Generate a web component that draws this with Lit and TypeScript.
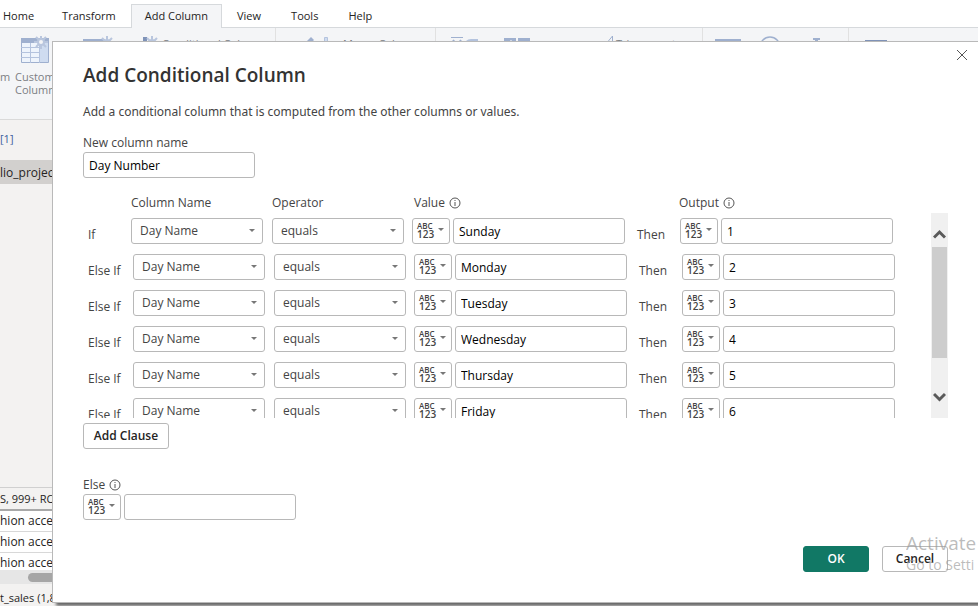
import { LitElement, html, css, svg } from "lit";
import { customElement, property } from "lit/decorators.js";

const FONT = css`"Open Sans", "Noto Sans", sans-serif`;

const burst = (x: number, y: number) => svg`
  <g transform="translate(${x} ${y})" stroke="#b9c6de" stroke-width="2">
    <path d="M7 0V4M7 10V14M0 7H4M10 7H14M2 2L5 5M9 9L12 12M12 2L9 5M5 9L2 12" />
    <circle cx="7" cy="7" r="3" fill="#f4f5f7" />
  </g>`;

const infoIcon = html`<svg class="info" width="12" height="12" viewBox="0 0 12 12" aria-hidden="true">
  <circle cx="6" cy="6" r="5" fill="none" stroke="#555" />
  <path d="M6 5V9M6 3V4" stroke="#555" />
</svg>`;

const caret = html`<svg class="caret" width="6" height="4" viewBox="0 0 6 4" aria-hidden="true">
  <path d="M0 0H6L3 3Z" fill="#777" />
</svg>`;

@customElement("type-picker")
export class TypePicker extends LitElement {
  static styles = css`
    :host { display: block; flex: none; }
    button {
      display: flex; align-items: center; gap: 4px;
      box-sizing: border-box; width: 38px; height: 26px; padding: 0 0 2px 4px;
      border: 1px solid #b8b8b8; border-radius: 3px; background: #fff;
      color: #444; font-family: ${FONT}; font-weight: 600; text-align: left;
    }
    .glyph { display: block; width: 17px; }
    .abc { display: block; font-size: 8px; line-height: 8px; }
    .num { display: block; font-size: 10px; line-height: 9px; }
  `;
  render() {
    return html`<button type="button" aria-label="Value type" aria-haspopup="listbox">
      <span class="glyph"><span class="abc">ABC</span><span class="num">123</span></span>${caret}
    </button>`;
  }
}

@customElement("clause-row")
export class ClauseRow extends LitElement {
  @property() keyword = "Else If";
  @property() value = "";
  @property() output = "";

  static styles = css`
    :host {
      display: flex; align-items: center; height: 26px;
      padding-left: 5px; color: #444; font: 12px/16px ${FONT};
    }
    :host([keyword="Else If"]) .keyword { width: 45px; }
    .keyword { flex: none; width: 43px; padding-top: 7px; white-space: nowrap; }
    .pick { display: grid; align-items: center; flex: none; width: 132px; margin-right: 9px; }
    .pick.operator { margin-right: 8px; }
    .pick > * { grid-area: 1 / 1; }
    .pick .caret { justify-self: end; margin-right: 8px; pointer-events: none; }
    select {
      appearance: none; box-sizing: border-box; width: 100%; height: 26px;
      padding: 0 20px 0 8px; border: 1px solid #b8b8b8; border-radius: 3px;
      background: #fff; color: #444; font: inherit;
    }
    input {
      box-sizing: border-box; flex: none; width: 172px; height: 26px; margin-left: 3px;
      padding: 1px 5px 0; border: 1px solid #b8b8b8; border-radius: 3px;
      background: #fff; color: #000; font: inherit;
    }
    .then { flex: none; width: 43px; padding: 7px 0 0 12px; }
  `;
  render() {
    return html`
      <span class="keyword">${this.keyword}</span>
      <span class="pick"><select aria-label="Column Name"><option>Day Name</option></select>${caret}</span>
      <span class="pick operator"><select aria-label="Operator"><option>equals</option></select>${caret}</span>
      <type-picker></type-picker>
      <input aria-label="Value" .value=${this.value} />
      <span class="then">Then</span>
      <type-picker></type-picker>
      <input aria-label="Output" .value=${this.output} />
    `;
  }
}

const DAYS = ["Sunday", "Monday", "Tuesday", "Wednesday", "Thursday", "Friday"];

@customElement("app-root")
export class AppRoot extends LitElement {
  static styles = css`
    :host {
      display: flex; flex-direction: column; position: relative; box-sizing: border-box;
      min-height: 100vh; overflow: hidden; background: #f3f2f1; color: #252423;
      font: 12px/16px ${FONT};
    }
    * { box-sizing: border-box; }

    .tabs { display: flex; height: 28px; padding-top: 4px; background: #fff; border-bottom: 1px solid #d6d9dc; }
    .tab {
      display: flex; height: 24px; padding: 4px 15px 0; border: 0; background: none;
      color: #252423; font: 11px/16px ${FONT}; white-space: nowrap;
    }
    .tab:first-child { padding: 4px 13px 0 3px; }
    .tab.active { background: #f4f5f7; border: 1px solid #d6d9dc; border-bottom: 0; padding: 3px 13px 0; }

    .ribbon { display: flex; height: 92px; background: #f4f5f7; border-bottom: 1px solid #dadada; color: #7c7f84; font-size: 11px; }
    .group { display: flex; flex: none; gap: 6px; padding-top: 8px; border-right: 1px solid #e1e1e1; overflow: hidden; }
    .group svg { flex: none; display: block; }
    .group.first { width: 276px; gap: 0; }
    .group.text { width: 160px; padding-left: 27px; }
    .group.number { width: 267px; padding-left: 15px; gap: 25px; }
    .group.date { width: 146px; padding-left: 12px; gap: 18px; }
    .group.ai { border: 0; padding-left: 16px; }
    .cut { width: 15px; padding-top: 33px; }
    .tool { flex: none; width: 62px; }
    .tool svg { margin-left: 6px; }
    .tool span { display: block; line-height: 13px; }
    .tool .name { padding-top: 6px; }
    .trig { display: flex; gap: 2px; margin-left: 50px; }

    .formula { height: 40px; padding: 11px 0 0; color: #3b5f9e; font-size: 11px; }
    .query { height: 24px; padding-top: 5px; background: #d2d0ce; }
    .pane { flex: 1; }
    .rows { height: 24px; padding-top: 3px; border-top: 1px solid #d0d0d0; border-bottom: 2px solid #a8a8a8; font-size: 11px; }
    .cell { height: 21px; padding-top: 2px; background: #fff; border-bottom: 1px solid #d8d8d8; }
    .cell.last { height: 17px; border: 0; overflow: hidden; }
    .hscroll { height: 14px; padding: 3px 0 0 28px; background: #e6e6e6; }
    .hthumb { width: 120px; height: 9px; border-radius: 5px; background: #a6a6a6; }
    .status { height: 22px; padding-top: 6px; font-size: 11px; }

    .dialog {
      position: absolute; inset: 41px 0 3px 52px; padding: 19px 30px 30px;
      display: flex; flex-direction: column; background: #fff;
      border: 1px solid #b9b9b9; border-right: 0; box-shadow: 4px 3px 3px #666; color: #444;
    }
    .close { position: absolute; top: 7px; right: 10px; width: 12px; height: 12px; padding: 0; border: 0; background: none; }
    .close svg { display: block; }
    h1 { margin: 0; font-size: 19px; line-height: 28px; font-weight: 600; color: #333; }
    .lead { margin: 14px 0 14px; font: 12px/18px "Noto Sans", sans-serif; }
    .field {
      display: block; width: 172px; height: 26px; padding: 1px 5px 0; border: 1px solid #b8b8b8;
      border-radius: 3px; background: #fff; color: #000; font: inherit;
    }
    .name-label { height: 17px; }
    .heads { display: flex; margin-top: 17px; height: 18px; padding-left: 48px; }
    .head { width: 141px; height: 16px; flex: none; display: flex; align-items: center; gap: 4px; }
    .head.value { width: 266px; padding-left: 1px; }
    .clauses { display: flex; height: 205px; }
    .list { flex: 1; display: flex; flex-direction: column; gap: 10px; padding-top: 5px; overflow: hidden; }
    .list clause-row { flex: none; }
    .scroll { width: 17px; display: flex; flex-direction: column; align-items: center; background: #f0f0f0; padding-top: 16px; }
    .scroll svg { display: block; }
    .thumb { width: 15px; height: 111px; margin: 6px 0 33px; background: #cdcdcd; }
    .button {
      height: 26px; padding: 0; border: 1px solid #b8b8b8; border-radius: 3px; background: #fff;
      color: #252423; font: 600 12px/16px ${FONT};
    }
    .add { width: 86px; margin-top: 5px; }
    .else-label { display: flex; align-items: center; gap: 4px; margin: 28px 0 1px; }
    .else { display: flex; gap: 3px; }
    .actions { display: flex; justify-content: flex-end; gap: 13px; margin-top: auto; }
    .actions .button { width: 66px; }
    .button.ok { background: #117865; border-color: #117865; color: #fff; }
    .watermark {
      position: absolute; right: 0; bottom: 31px; width: 72px; overflow: hidden; white-space: nowrap;
      color: #999999a8; pointer-events: none; font-size: 14px; line-height: 20px;
    }
    .watermark strong { display: block; font-weight: 400; font-size: 19px; line-height: 24px; }
  `;

  render() {
    return html`
      <nav class="tabs">
        ${["Home", "Transform", "Add Column", "View", "Tools", "Help"].map(
          (t) => html`<button class="tab ${t === "Add Column" ? "active" : ""}">${t}</button>`
        )}
      </nav>
      <div class="ribbon">
        <div class="group first">
          <div class="cut">m</div>
          <div class="tool">
            <svg width="30" height="28" viewBox="0 0 30 28">
              <path d="M0.5 2.5H27.5V26.5H0.5Z" fill="#eef4fc" stroke="#9fb0cf" />
              <path d="M0 2H28V7H0Z" fill="#9fb0cf" />
              <path d="M18 7H27V26H18Z" fill="#cfdcf0" />
              <path d="M0 11.5H18M0 16.5H18M0 21.5H18M9.5 7V27M18.5 7V27" stroke="#b4c3de" />
              ${burst(13, -1)}
            </svg>
            <span class="name">Custom</span><span>Column</span>
          </div>
          <div class="tool">
            <svg width="32" height="28" viewBox="0 0 32 28"><path d="M0 3H22V8H0Z" fill="#9fb0cf" />${burst(17, 0)}</svg>
          </div>
          <svg width="23" height="14" viewBox="0 0 23 14"><path d="M4 1H8V6H4Z" fill="#7f93b8" />${burst(6, 0)}</svg>
          <span>Conditional Column</span>
        </div>
        <div class="group text">
          <svg width="14" height="14" viewBox="0 0 14 14"><path d="M1 8L8 1L11 4L4 11Z" fill="#9fb0cf" /></svg>
          <svg width="14" height="14" viewBox="0 0 14 14"><path d="M1.5 1.5H4.5V14H1.5Z" fill="#cfdcf0" stroke="#b4c3de" /></svg>
          <span>Merge Columns</span>
        </div>
        <div class="group number">
          <svg width="28" height="14" viewBox="0 0 28 14">
            <path d="M0 1.5H12" stroke="#9fb0cf" />
            <path d="M2 4L6 9L10 4" stroke="#9fb0cf" stroke-width="2" fill="none" />
            <path d="M15 5Q17 3 20 3H27V7H15Z" fill="#b4c3de" />
          </svg>
          <svg width="26" height="14" viewBox="0 0 26 14"><path d="M0 2H12V14H0ZM14 2H26V14H14Z" fill="#9fb0cf" /><path d="M7 4V8" stroke="#fff" fill="none" /></svg>
          <div class="trig">
            <svg width="9" height="14" viewBox="0 0 9 14"><path d="M1 8L7.5 0V14" stroke="#9fb0cf" fill="none" /></svg>
            <span>Trigonometry</span>
          </div>
        </div>
        <div class="group date">
          <svg width="26" height="14" viewBox="0 0 26 14"><path d="M0 3H26V14H0Z" fill="#9fb0cf" /></svg>
          <svg width="22" height="22" viewBox="0 0 22 22"><circle cx="11" cy="11" r="10" fill="none" stroke="#9fb0cf" stroke-width="1.5" /></svg>
          <svg width="30" height="14" viewBox="0 0 30 14"><path d="M14 2H21V4H19V8H16V4H14Z" fill="#9fb0cf" /></svg>
        </div>
        <div class="group ai">
          <svg width="22" height="14" viewBox="0 0 22 14"><path d="M0 4H22V14H0Z" fill="#7f93b8" /></svg>
        </div>
      </div>
      <div class="formula">[1]</div>
      <div class="query">lio_project</div>
      <div class="pane"></div>
      <div class="rows">S, 999+ ROWS</div>
      <div class="cell">hion accessories</div>
      <div class="cell">hion accessories</div>
      <div class="cell last">hion accessories</div>
      <div class="hscroll"><div class="hthumb"></div></div>
      <div class="status">t_sales (1,8</div>

      <section class="dialog" role="dialog" aria-labelledby="title">
        <button class="close" aria-label="Close">
          <svg width="12" height="12" viewBox="0 0 12 12"><path d="M1 1L11 11M11 1L1 11" stroke="#555" /></svg>
        </button>
        <h1 id="title">Add Conditional Column</h1>
        <p class="lead">Add a conditional column that is computed from the other columns or values.</p>
        <label class="name-label" for="name">New column name</label>
        <input class="field" id="name" value="Day Number" />
        <div class="heads">
          <span class="head">Column Name</span>
          <span class="head">Operator</span>
          <span class="head value">Value ${infoIcon}</span>
          <span class="head">Output ${infoIcon}</span>
        </div>
        <div class="clauses">
          <div class="list">
            ${DAYS.map(
              (d, i) => html`<clause-row keyword=${i ? "Else If" : "If"} value=${d} output=${i + 1}></clause-row>`
            )}
          </div>
          <div class="scroll">
            <svg width="13" height="12" viewBox="0 0 13 12"><path d="M1 8.5L6.5 3L12 8.5" fill="none" stroke="#5a5a5a" stroke-width="3" /></svg>
            <div class="thumb"></div>
            <svg width="13" height="12" viewBox="0 0 13 12"><path d="M1 3L6.5 8.5L12 3" fill="none" stroke="#5a5a5a" stroke-width="3" /></svg>
          </div>
        </div>
        <button class="button add">Add Clause</button>
        <label class="else-label" for="else">Else ${infoIcon}</label>
        <div class="else"><type-picker></type-picker><input class="field" id="else" /></div>
        <div class="actions">
          <button class="button ok">OK</button>
          <button class="button">Cancel</button>
        </div>
      </section>
      <div class="watermark"><strong>Activate</strong>Go to Setti</div>
    `;
  }
}
